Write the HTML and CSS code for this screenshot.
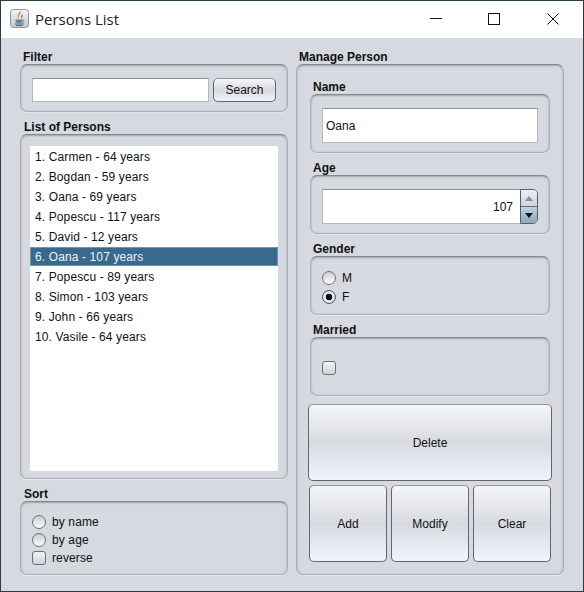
FILE: index.html
```html
<!DOCTYPE html>
<html lang="en">
<head>
<meta charset="UTF-8" />
<title>Persons List</title>
<link rel="stylesheet" href="styles.css">
</head>
<body>

  <div class="window">
    <div class="titlebar">
      <svg class="app-icon" width="19" height="19" viewBox="0 0 19 19">
        <defs>
          <linearGradient id="iconBg" x1="0" y1="0" x2="0" y2="1">
            <stop offset="0" stop-color="#f2f4f7" />
            <stop offset="1" stop-color="#c3c9d2" />
          </linearGradient>
        </defs>
        <rect x="0.5" y="0.5" width="18" height="18" rx="3" fill="url(#iconBg)" stroke="#8b97a6" />
        <path d="M10.5 2C12 4.5 7.5 5.5 9 9.5C6.5 7.5 8.5 4.5 10.5 2Z M12 5C11.5 6.5 10.5 7.5 11 9.5C13 8.5 13.5 6.5 12 5Z" fill="#dc7420" />
        <path d="M5.5 10.5H12.5V12.5C12.5 13.7 11 14 9 14C7 14 5.5 13.7 5.5 12.5Z" fill="#71818f" />
        <path d="M12.5 10.8C14.5 10.5 14.5 12.8 12.3 13" fill="none" stroke="#71818f" />
        <path d="M4.5 15H14M6 16.5H12.5" stroke="#56677b" />
      </svg>
      <span class="title-text">Persons List</span>
      <div class="window-controls">
        <svg class="control" width="58" height="12" viewBox="0 0 58 12"><path d="M23 5.5H35" stroke="#111" /></svg>
        <svg class="control" width="58" height="12" viewBox="0 0 58 12"><rect x="23.5" y="0.5" width="11" height="11" fill="none" stroke="#111" /></svg>
        <svg class="control" width="58" height="12" viewBox="0 0 58 12"><path d="M24.5 0.5L35.5 11.5M35.5 0.5L24.5 11.5" stroke="#111" /></svg>
      </div>
    </div>

    <div class="content">
      <div class="column">
        <div class="group-title first">Filter</div>
        <div class="group filter-group">
          <input type="text" class="field filter-field" />
          <button class="btn search-btn">Search</button>
        </div>

        <div class="group-title list-title">List of Persons</div>
        <div class="group list-group">
          <ul class="person-list">
            <li>1. Carmen - 64 years</li>
            <li>2. Bogdan - 59 years</li>
            <li>3. Oana - 69 years</li>
            <li>4. Popescu - 117 years</li>
            <li>5. David - 12 years</li>
            <li class="selected">6. Oana - 107 years</li>
            <li>7. Popescu - 89 years</li>
            <li>8. Simon - 103 years</li>
            <li>9. John - 66 years</li>
            <li>10. Vasile - 64 years</li>
          </ul>
        </div>

        <div class="group-title list-title">Sort</div>
        <div class="group sort-group">
          <label class="option"><input type="radio" name="sort" />by name</label>
          <label class="option"><input type="radio" name="sort" />by age</label>
          <label class="option"><input type="checkbox" />reverse</label>
        </div>
      </div>

      <div class="column">
        <div class="group-title first manage-title">Manage Person</div>
        <div class="group manage-group">
          <div class="group-title sub first-sub">Name</div>
          <div class="group sub-group">
            <input type="text" class="field" value="Oana" />
          </div>

          <div class="group-title sub">Age</div>
          <div class="group sub-group">
            <div class="spinner">
              <input type="text" class="field spinner-field" value="107" />
              <div class="spinner-btns">
                <div class="spin-up"></div>
                <div class="spin-down"></div>
              </div>
            </div>
          </div>

          <div class="group-title sub">Gender</div>
          <div class="group sub-group gender-group">
            <label class="option tall"><input type="radio" name="gender" />M</label>
            <label class="option tall"><input type="radio" name="gender" checked />F</label>
          </div>

          <div class="group-title sub">Married</div>
          <div class="group sub-group married-group">
            <input type="checkbox" />
          </div>

          <button class="btn delete-btn">Delete</button>
          <div class="btn-row">
            <button class="btn">Add</button>
            <button class="btn">Modify</button>
            <button class="btn">Clear</button>
          </div>
        </div>
      </div>
    </div>
  </div>

</body>
</html>
```

FILE: styles.css
```css
html, body {
  margin: 0;
  padding: 0;
  background: #d6d9df;
  font-family: 'Liberation Sans', Arial, sans-serif;
  font-size: 12px;
  color: #111;
}

.window {
  box-sizing: border-box;
  width: 584px;
  height: 592px;
  border: 1px solid #27403f;
  background: #d6d9df;
  display: flex;
  flex-direction: column;
}

.titlebar {
  box-sizing: border-box;
  height: 37px;
  flex: none;
  background: #fff;
  display: flex;
  align-items: center;
  padding: 0 2px 2px 9px;
}

.app-icon {
  margin-right: 6px;
}

.title-text {
  font-family: 'Open Sans', sans-serif;
  font-size: 15px;
  color: #222;
}

.window-controls {
  margin-left: auto;
  display: flex;
}

.control {
  display: block;
}

.content {
  flex: 1;
  display: flex;
  gap: 8px;
  padding: 12px 0 0 19px;
}

.column {
  width: 268px;
  display: flex;
  flex-direction: column;
}

.group-title {
  height: 14px;
  line-height: 14px;
  font-weight: 700;
  padding-left: 3px;
}

.manage-title {
  padding-left: 3px;
}

.list-title {
  margin-top: 8px;
  padding-left: 4px;
}

.group {
  box-sizing: border-box;
  border: 1px solid #aeb1b7;
  border-top-color: #85888e;
  border-radius: 7px;
  box-shadow: inset 0 1px 2px rgba(0,0,0,0.22), inset 0 0 2px rgba(0,0,0,0.12), 0 1px 0 #e4e6ea;
}

.filter-group {
  height: 48px;
  display: flex;
  gap: 4px;
  padding: 13px 11px 0;
}

.field {
  box-sizing: border-box;
  width: 100%;
  margin: 0;
  padding: 0 3px 0 3px;
  border: 1px solid #b4b6ba;
  border-top-color: #8e9095;
  background: #fff;
  font-family: inherit;
  font-size: 12px;
  color: #111;
  border-radius: 0;
  outline: none;
}

.filter-field {
  width: 177px;
  height: 24px;
}

.btn {
  box-sizing: border-box;
  margin: 0;
  padding: 0;
  border: 1px solid #63666c;
  border-top-color: #95979c;
  border-radius: 5px;
  background: linear-gradient(#f6f6f8, #d7dae0 50%, #f2f4fb);
  font-family: inherit;
  font-size: 12px;
  color: #111;
}

.search-btn {
  width: 63px;
  height: 24px;
}

.list-group {
  height: 345px;
  padding: 11px 9px 7px;
}

.person-list {
  list-style: none;
  margin: 0;
  padding: 1px 0 0;
  height: 100%;
  box-sizing: border-box;
  background: #fff;
  letter-spacing: 0.12px;
}

.person-list li {
  box-sizing: border-box;
  height: 20px;
  line-height: 20px;
  padding-left: 5px;
}

.person-list .selected {
  height: 19px;
  margin-bottom: 1px;
  background: #39698d;
  border: 1px solid #7195b0;
  line-height: 18px;
  padding-left: 4px;
  color: #eef2f5;
}

.sort-group {
  height: 74px;
  padding: 11px 11px 0;
}

.option {
  display: flex;
  align-items: center;
  height: 18px;
  gap: 6px;
  letter-spacing: 0.12px;
}

.option.tall {
  height: 19px;
}

input[type=radio], input[type=checkbox] {
  appearance: none;
  box-sizing: border-box;
  flex: none;
  display: block;
  width: 14px;
  height: 14px;
  margin: 0;
  border: 1px solid #6b7078;
  background: linear-gradient(#c9ccd2, #eeeff2 70%, #f7f8fa);
}

input[type=radio] {
  border-radius: 50%;
}

input[type=checkbox] {
  border-radius: 3px;
  background: linear-gradient(#f3f4f6, #cfd2d8);
}

input[type=radio]:checked {
  border-color: #4a5a70;
  background: radial-gradient(circle, #111 0, #111 3px, #e6e8ec 3.6px, #d6d9df);
}

.manage-group {
  flex: none;
  height: 511px;
  padding: 15px 11px 0;
}

.sub {
  margin: 8px 2px 0;
}

.first-sub {
  margin-top: 0;
}

.sub-group {
  height: 59px;
  margin: 0 2px;
  padding: 13px 11px 0;
}

.sub-group > .field {
  height: 35px;
}

.spinner {
  display: flex;
  height: 35px;
}

.spinner-field {
  flex: 1;
  width: auto;
  height: 35px;
  text-align: right;
  padding-right: 7px;
  border-right: none;
}

.spinner-btns {
  box-sizing: border-box;
  width: 18px;
  display: flex;
  flex-direction: column;
  border: 1px solid #4d5f78;
  border-radius: 0 5px 5px 0;
  overflow: hidden;
}

.spin-up, .spin-down {
  flex: 1;
  display: flex;
  align-items: center;
  justify-content: center;
}

.spin-up {
  background: linear-gradient(#eef0f3, #cfd3da);
  border-bottom: 1px solid #5d6f87;
}

.spin-down {
  background: linear-gradient(#c3cfdc, #8fa6bd);
}

.spin-up::before {
  content: "";
  border: 4px solid transparent;
  border-top: none;
  border-bottom: 5px solid #8c9096;
}

.spin-down::before {
  content: "";
  border: 4px solid transparent;
  border-bottom: none;
  border-top: 5px solid #111;
}

.gender-group {
  padding-top: 11px;
}

.married-group {
  display: flex;
  align-items: center;
  padding-top: 3px;
}

.delete-btn {
  display: block;
  width: 244px;
  height: 77px;
  margin-top: 8px;
}

.btn-row {
  display: flex;
  gap: 4px;
  margin: 4px 1px 0;
}

.btn-row .btn {
  width: 78px;
  height: 77px;
}
```
